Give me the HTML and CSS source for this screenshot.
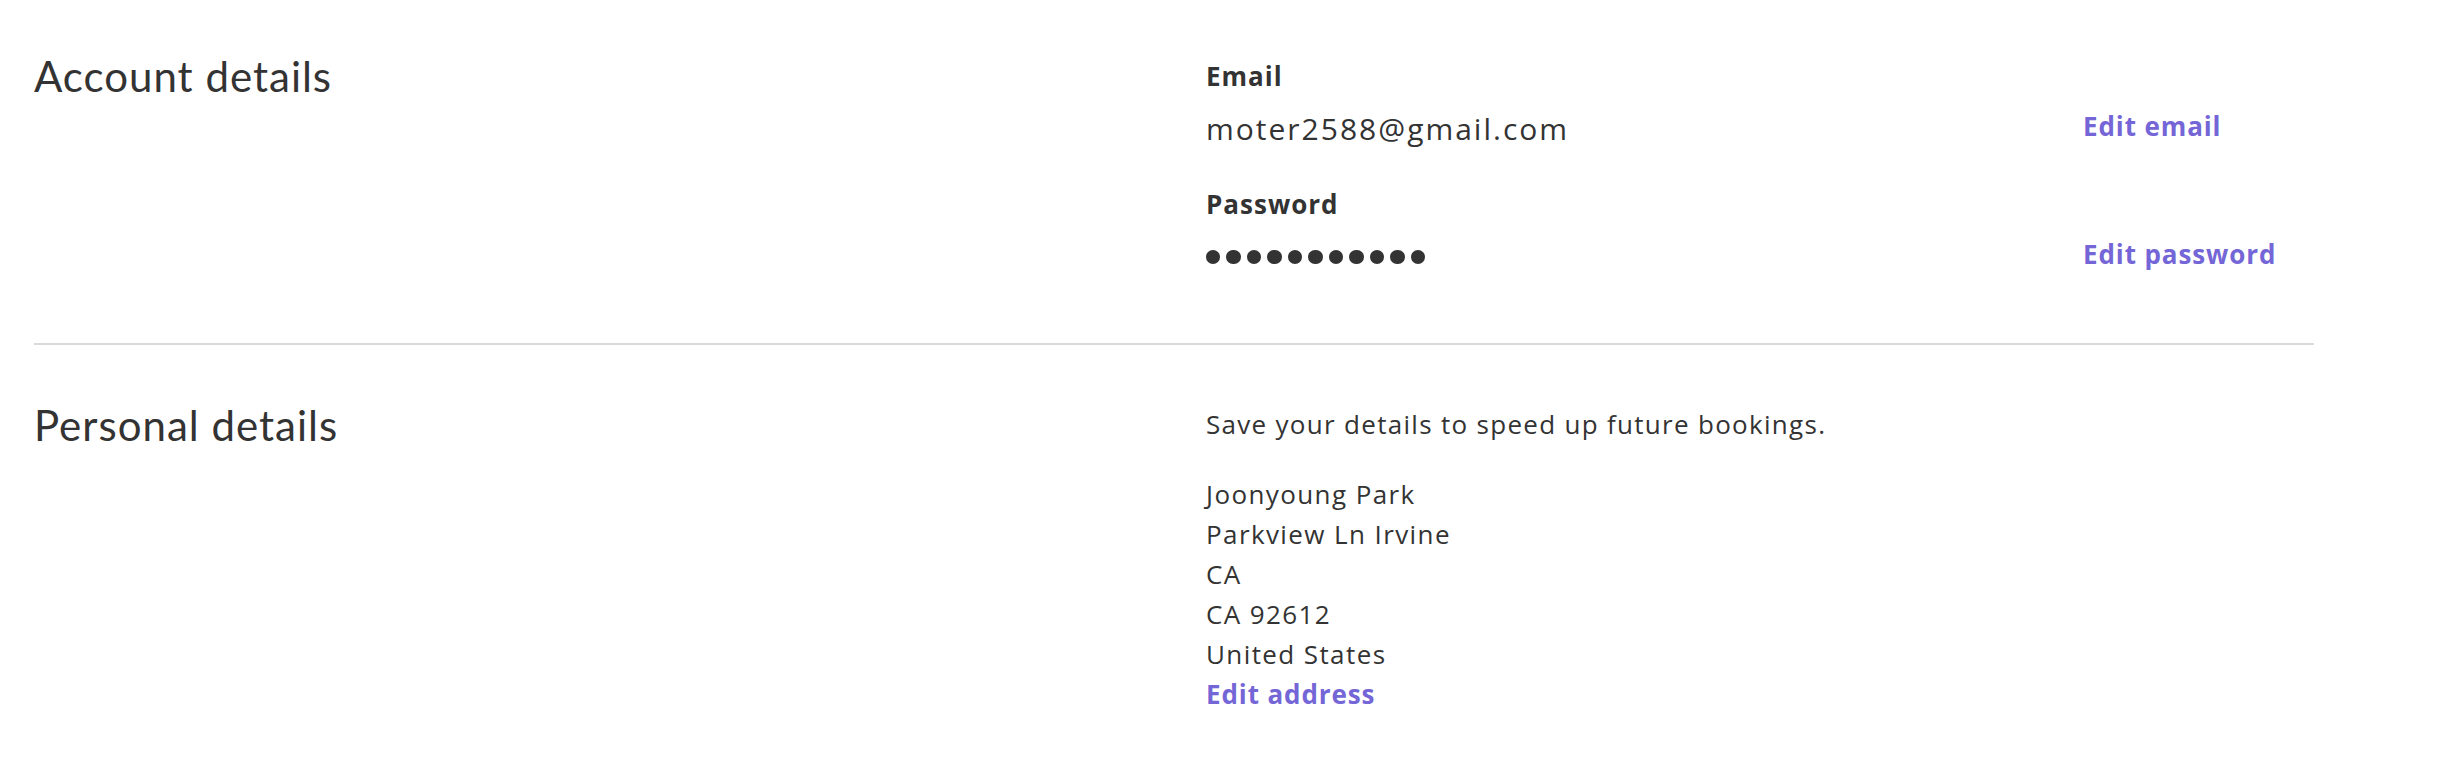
FILE: index.html
```html
<!DOCTYPE html>
<html lang="en">
<head>
<meta charset="utf-8">
<title>Account settings</title>
<link rel="stylesheet" href="styles.css">
</head>
<body>
<main class="page">
  <section class="section section-account">
    <h2 class="section-title">Account details</h2>
    <div class="section-body">
      <div class="field">
        <div class="field-label">Email</div>
        <div class="field-row">
          <div class="field-value email">moter2588@gmail.com</div>
          <a class="edit-link" href="#">Edit email</a>
        </div>
      </div>
      <div class="field field-password">
        <div class="field-label">Password</div>
        <div class="field-row">
          <div class="field-value dots" aria-label="password hidden">
            <span class="dot"></span><span class="dot"></span><span class="dot"></span><span class="dot"></span><span class="dot"></span><span class="dot"></span><span class="dot"></span><span class="dot"></span><span class="dot"></span><span class="dot"></span><span class="dot"></span>
          </div>
          <a class="edit-link" href="#">Edit password</a>
        </div>
      </div>
    </div>
  </section>
  <hr class="divider">
  <section class="section section-personal">
    <h2 class="section-title">Personal details</h2>
    <div class="section-body">
      <p class="intro">Save your details to speed up future bookings.</p>
      <div class="address">
        <div class="address-line">Joonyoung Park</div>
        <div class="address-line">Parkview Ln Irvine</div>
        <div class="address-line">CA</div>
        <div class="address-line">CA 92612</div>
        <div class="address-line">United States</div>
        <a class="edit-link address-edit" href="#">Edit address</a>
      </div>
    </div>
  </section>
</main>
</body>
</html>
```
FILE: styles.css
```css
html, body {
  margin: 0;
  padding: 0;
  background: #ffffff;
}

body {
  font-family: "Open Sans", "Liberation Sans", sans-serif;
  color: #333333;
}

.page {
  width: 2280px;
  padding-left: 34px;
}

.section {
  display: grid;
  grid-template-columns: 1172px 1fr;
}

.section-account {
  padding-top: 51px;
  padding-bottom: 66px;
}

.section-personal {
  padding-top: 55px;
}

.section-title {
  margin: 0;
  font-family: "Lato", "Open Sans", sans-serif;
  font-size: 42px;
  line-height: 50px;
  font-weight: 400;
  letter-spacing: 1px;
  color: #333333;
}

.section-account .section-body {
  padding-top: 9px;
}

.section-personal .section-body {
  padding-top: 4px;
}

.field-label {
  font-size: 26px;
  line-height: 32px;
  font-weight: 700;
  letter-spacing: 1px;
}

.field-row {
  display: grid;
  grid-template-columns: 1fr 231px;
  align-items: center;
  margin-top: 17px;
}

.field-password {
  margin-top: 39px;
}

.field-value {
  font-size: 30px;
  line-height: 40px;
}

.email {
  letter-spacing: 2px;
}

.dots {
  display: flex;
  gap: 6.3px;
  align-items: center;
  height: 40px;
}

.dot {
  width: 14.2px;
  height: 14.2px;
  border-radius: 50%;
  background: #333333;
}

.edit-link {
  font-size: 26px;
  line-height: 32px;
  font-weight: 700;
  letter-spacing: 0.9px;
  color: #7466d6;
  text-decoration: none;
}

.field-row .edit-link {
  margin-bottom: 6px;
}

.intro {
  margin: 0;
  font-size: 26px;
  line-height: 40px;
  letter-spacing: 1.3px;
}

.address {
  margin-top: 30px;
  display: flex;
  flex-direction: column;
  align-items: flex-start;
}

.address-line {
  font-size: 26px;
  line-height: 40px;
  letter-spacing: 1.4px;
}

.address-edit {
  line-height: 40px;
}

.divider {
  margin: 0;
  border: 0;
  height: 2px;
  background: #d9d9d9;
}
```
